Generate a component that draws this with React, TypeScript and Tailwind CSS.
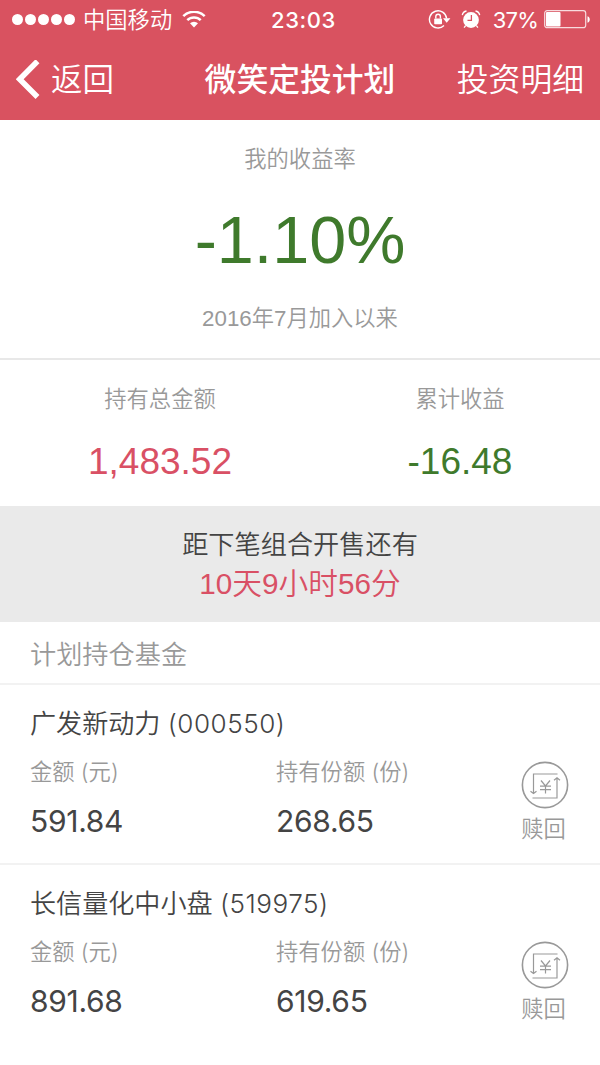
const funds = [
  { name: "广发新动力", code: "000550", amount: "591.84", shares: "268.65" },
  { name: "长信量化中小盘", code: "519975", amount: "891.68", shares: "619.65" },
];

function WifiIcon() {
  return (
    <svg width="24" height="18" viewBox="0 0 24 18" fill="none" stroke="white" strokeWidth="2.5">
      <path d="M1.3 5.2a15.2 15.2 0 0 1 21.4 0" />
      <path d="M5.3 9.2a9.5 9.5 0 0 1 13.4 0" />
      <path d="M12 16.6 8 12.3a5.8 5.8 0 0 1 8 0z" fill="white" stroke="none" />
    </svg>
  );
}

function RotationLockIcon() {
  return (
    <svg width="23" height="20" viewBox="0 0 23 20" fill="none" stroke="white" strokeWidth="1.4">
      <path d="M16 15.6A8.6 8.6 0 1 1 18.6 8.5" />
      <path d="M15 8.2h7.4l-3.7 4.6z" fill="white" stroke="none" />
      <rect x="6.2" y="8.4" width="7.8" height="5.8" rx="0.8" fill="white" stroke="none" />
      <path d="M7.8 8.6V6.6a2.3 2.3 0 0 1 4.6 0v2" />
    </svg>
  );
}

function AlarmIcon() {
  return (
    <svg width="20" height="20" viewBox="0 0 20 20" fill="none">
      <circle cx="10" cy="10" r="7.9" fill="white" />
      <path d="M10.4 5v5.4H6.5" stroke="#d95260" strokeWidth="1.3" />
      <path d="M1.3 5.2A5 5 0 0 1 5.5 1M14.5 1a5 5 0 0 1 4.2 4.2M4.6 15.7l-1.5 2M15.4 15.7l1.5 2" stroke="white" strokeWidth="1.3" />
    </svg>
  );
}

function BatteryIcon() {
  return (
    <svg width="47" height="20" viewBox="0 0 47 20" fill="none">
      <rect x="0.7" y="0.7" width="41" height="17" rx="2.5" stroke="white" strokeOpacity="0.8" strokeWidth="1.2" />
      <rect x="2" y="2" width="14.5" height="14.4" rx="1" fill="white" />
      <path d="M43.5 6.2c3 .8 3 5.7 0 6.5z" fill="white" />
    </svg>
  );
}

function RedeemIcon() {
  return (
    <svg width="48" height="48" viewBox="0 0 48 48" fill="none" stroke="#999" strokeWidth="1.2">
      <circle cx="24" cy="24" r="22.6" strokeWidth="1.6" />
      <path d="M36.5 13H12.5v19.500M9.500 30.200l3 2.300 3-2.300" />
      <path d="M11.5 37H36V17M33 19.300l3-2.500 3 2.500" />
      <path d="M20 19.500l4.500 5.500 4.500-5.500M24.500 25v7.500M19 25.200h11M19 28.700h11" />
    </svg>
  );
}

function StatusBar() {
  return (
    <div className="flex h-10 items-center pl-3 pr-[9px]">
      <div className="flex w-[259px] items-center">
        <div className="mb-[2px] flex gap-[2px]">
          {[0, 1, 2, 3, 4].map((i) => (
            <span key={i} className="size-[11px] rounded-full bg-white" />
          ))}
        </div>
        <span className="ml-2 mr-[10px] pt-[2px] text-[22.3px] leading-[38px]">中国移动</span>
        <WifiIcon />
      </div>
      <span className="font-[Inter] text-[22px] font-medium tracking-[0.6px]">23:03</span>
      <div className="flex flex-1 items-center justify-end">
        <RotationLockIcon />
        <span className="ml-[10px] mr-3">
          <AlarmIcon />
        </span>
        <span className="mr-[6px] font-[Inter] text-[22px] font-normal tracking-[-0.8px]">37%</span>
        <BatteryIcon />
      </div>
    </div>
  );
}

function Header() {
  return (
    <header className="h-[120px] bg-[#d95260] text-white">
      <StatusBar />
      <nav className="flex h-20 items-center px-4">
        <div className="flex flex-1 items-center">
          <svg width="24" height="40" viewBox="0 0 24 40" fill="none" stroke="white" strokeWidth="5.5">
            <path d="M21.5 1.2 3.7 19.2l17.8 17.8" />
          </svg>
          <span className="ml-[11px] text-[31.5px] leading-[80px]">返回</span>
        </div>
        <h1 className="text-[31.8px] leading-[80px] font-medium">微笑定投计划</h1>
        <div className="flex-1 text-right text-[31.8px] leading-[80px]">投资明细</div>
      </nav>
    </header>
  );
}

function Fund({ name, code, amount, shares }: (typeof funds)[number]) {
  return (
    <li className="flex h-[180px] border-t-2 border-[#f2f2f2] pl-[30px] pr-[31px]">
      <div className="flex-1 pt-[19px]">
        <div className="text-[26.1px] leading-10 text-[#444]">
          {name} <span className="font-[Inter] tracking-[0.5px]">({code})</span>
        </div>
        <div className="mt-2 grid grid-cols-[246px_1fr]">
          <div className="text-[22.3px] leading-10 text-[#999]">
            金额 <span className="font-[Inter]">(</span>元<span className="font-[Inter]">)</span>
          </div>
          <div className="text-[22.3px] leading-10 text-[#999]">
            持有份额 <span className="font-[Inter]">(</span>份<span className="font-[Inter]">)</span>
          </div>
          <div className="mt-2 font-[Inter] text-[30px] leading-10 font-normal tracking-[-0.3px] text-[#444]">{amount}</div>
          <div className="mt-2 font-[Inter] text-[30px] leading-10 font-normal tracking-[-0.3px] text-[#444]">{shares}</div>
        </div>
      </div>
      <button className="flex flex-col items-center pt-[76px] text-[22.3px] leading-[42px] text-[#999]">
        <RedeemIcon />
        <span className="mr-[3px]">赎回</span>
      </button>
    </li>
  );
}

export default function App() {
  return (
    <div className="min-h-[1065px] w-[600px] overflow-hidden bg-white font-['Liberation_Sans','Noto_Sans_CJK_SC',sans-serif] font-[350]">
      <Header />

      <section className="flex h-[238px] flex-col items-center pt-5 text-[22.3px] leading-10 text-[#999]">
        <div>我的收益率</div>
        <div className="mt-5 text-[66.5px] leading-[80px] text-[#3f7a2c]">-1.10%</div>
        <div className="mt-[19px]">2016年7月加入以来</div>
      </section>

      <section className="grid h-[148px] grid-cols-[320px_280px] border-t-2 border-[#e8e8e8] pt-5 text-center">
        <div>
          <div className="text-[22.3px] leading-10 text-[#999]">持有总金额</div>
          <div className="mt-5 text-[37px] leading-[44px] text-[#d95065]">1,483.52</div>
        </div>
        <div>
          <div className="text-[22.3px] leading-10 text-[#999]">累计收益</div>
          <div className="mt-5 text-[37px] leading-[44px] text-[#3f7a2c]">-16.48</div>
        </div>
      </section>

      <section className="h-[116px] bg-[#eaeaea] pt-[19px] text-center">
        <div className="text-[26.2px] leading-10 text-[#444]">距下笔组合开售还有</div>
        <div className="text-[29.7px] leading-[38px] text-[#d95065]">10天9小时56分</div>
      </section>

      <h2 className="h-[61px] pl-[30px] text-[26.2px] leading-[67px] text-[#999]">计划持仓基金</h2>
      <ul>
        {funds.map((fund) => (
          <Fund key={fund.code} {...fund} />
        ))}
      </ul>
    </div>
  );
}
